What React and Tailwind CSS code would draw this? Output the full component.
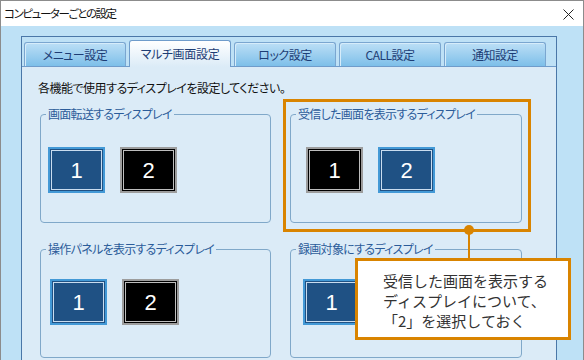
import React from "react";

const JP = "font-['Noto_Sans_CJK_JP','Noto_Sans',sans-serif]";

function DisplayBtn({ n, selected }) {
  return (
    <div
      className={
        "w-[57px] h-[46px] border-2 p-px " +
        (selected ? "border-[#4399d6] bg-[#1f5184]" : "border-[#9d9d9d] bg-black")
      }
    >
      <div
        className={
          "w-full h-full border flex items-center justify-center text-white text-[22px] font-['Liberation_Sans',Arial,sans-serif] " +
          (selected ? "border-[#c9dcef] bg-[#1f5184]" : "border-[#bdbdbd] bg-black")
        }
      >
        {n}
      </div>
    </div>
  );
}

function Group({ title, children }) {
  return (
    <fieldset className="border border-[#80a8c9] rounded-[4px] h-[117px] m-0 p-0">
      <legend className="ml-[5px] px-[2px] text-[12px] leading-[16px] text-[#2b5c9a] tracking-[-0.7px] [font-feature-settings:'palt']">
        {title}
      </legend>
      {children}
    </fieldset>
  );
}

function Tab({ label, selected }) {
  if (selected) {
    return (
      <div className="relative z-10 -mb-px w-[102px] h-[27px] rounded-t-[3px] border border-b-0 border-[#6f9ccb] bg-gradient-to-b from-white to-[#dbebf7] flex items-center justify-center text-[12px] text-[#1d3d75] tracking-[-0.3px] [font-feature-settings:'palt']">
        {label}
      </div>
    );
  }
  return (
    <div className="w-[102px] h-[24px] rounded-t-[3px] border border-b-0 border-[#7aa6d0] bg-gradient-to-b from-[#bcdff6] to-[#7dbfe9] flex items-center justify-center text-[12px] text-[#1d3d75] tracking-[-0.5px] [font-feature-settings:'palt'] shadow-[inset_1px_1px_0_#d6ecfa]">
      {label}
    </div>
  );
}

export default function App() {
  return (
    <div
      className={
        "relative w-[584px] h-[360px] overflow-hidden border border-b-0 border-[#8c8c8c] flex flex-col bg-[#bee1f6] " +
        JP
      }
    >
      {/* title bar */}
      <div className="h-[25px] shrink-0 bg-white flex items-center justify-between pl-[3px] pr-[9px]">
        <span className="text-[11.5px] text-[#111] tracking-[-1.4px] [font-feature-settings:'palt']">
          コンピューターごとの設定
        </span>
        <svg width="11" height="11" viewBox="0 0 11 11" className="mt-[1px]">
          <path d="M0.5 0.5 L10.5 10.5 M10.5 0.5 L0.5 10.5" stroke="#222" strokeWidth="1" />
        </svg>
      </div>

      {/* body */}
      <div className="flex-1 pl-[20px] pt-[10px] pr-[26px] flex">
        <div className="flex-1 border border-b-0 border-[#4a77a8] flex flex-col">
          {/* tabs */}
          <div className="h-[30px] shrink-0 flex items-end gap-[3px] pl-[2px] border-b border-[#6f9ccb]">
            <Tab label="メニュー設定" />
            <Tab label="マルチ画面設定" selected />
            <Tab label="ロック設定" />
            <Tab label="CALL設定" />
            <Tab label="通知設定" />
          </div>
          {/* content */}
          <div className="flex-1 bg-[#dbebf7] pt-[12px]">
            <div className="pl-[16px] text-[12px] leading-[17px] text-[#111] tracking-[-0.5px] [font-feature-settings:'palt']">
              各機能で使用するディスプレイを設定してください。
            </div>
            <div className="mt-[10px] pl-[18px] grid grid-cols-[231px_232px] gap-x-[19px] gap-y-[18px]">
              <Group title="画面転送するディスプレイ">
                <div className="mt-[25px] pl-[7px] flex gap-[15px]">
                  <DisplayBtn n="1" selected />
                  <DisplayBtn n="2" />
                </div>
              </Group>
              <Group title="受信した画面を表示するディスプレイ">
                <div className="mt-[25px] pl-[15px] flex gap-[15px]">
                  <DisplayBtn n="1" />
                  <DisplayBtn n="2" selected />
                </div>
              </Group>
              <Group title="操作パネルを表示するディスプレイ">
                <div className="mt-[22px] pl-[9px] flex gap-[15px]">
                  <DisplayBtn n="1" selected />
                  <DisplayBtn n="2" />
                </div>
              </Group>
              <Group title="録画対象にするディスプレイ">
                <div className="mt-[22px] pl-[12px] flex gap-[15px]">
                  <DisplayBtn n="1" selected />
                  <DisplayBtn n="2" />
                </div>
              </Group>
            </div>
          </div>
        </div>
      </div>

      {/* annotation overlay */}
      <div className="absolute left-[282px] top-[98px] w-[248px] h-[133px] border-[3px] border-[#d98400]" />
      <div className="absolute left-[467px] top-[230px] w-[2px] h-[30px] bg-[#d98400]" />
      <div className="absolute left-[463px] top-[224px] w-[10px] h-[10px] rounded-full bg-[#d98400]" />
      <div className="absolute left-[354px] top-[257px] w-[216px] h-[82px] border-[3px] border-[#d98400] bg-white pl-[25px] pt-[10px] text-[15px] text-[#333]">
        <div className="h-[20px] leading-[20px]">受信した画面を表示する</div>
        <div className="h-[20px] leading-[20px]">ディスプレイについて、</div>
        <div className="h-[20px] leading-[20px]">「2」を選択しておく</div>
      </div>
    </div>
  );
}
